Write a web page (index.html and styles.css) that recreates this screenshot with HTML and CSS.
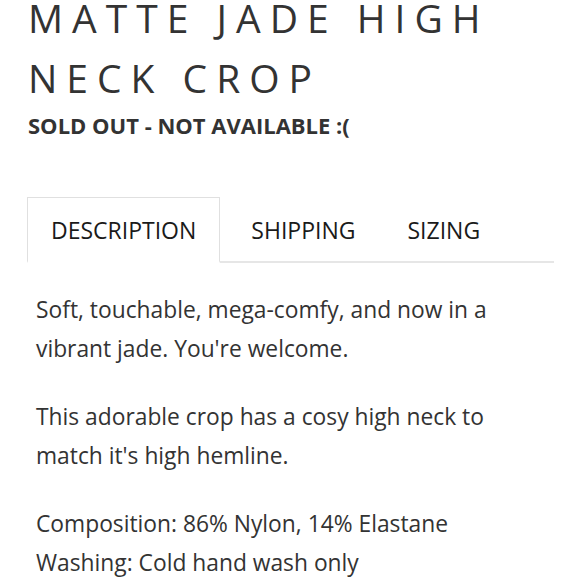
FILE: index.html
```html
<!DOCTYPE html>
<html lang="en">
<head>
<meta charset="utf-8">
<title>Matte Jade High Neck Crop</title>
<link rel="stylesheet" href="styles.css">
</head>
<body>
<main class="product">
  <h1 class="product-title">MATTE JADE HIGH<br>NECK CROP</h1>
  <p class="stock">SOLD OUT - NOT AVAILABLE :(</p>

  <ul class="tabs">
    <li class="tab is-active">DESCRIPTION</li>
    <li class="tab">SHIPPING</li>
    <li class="tab">SIZING</li>
  </ul>

  <div class="tab-panel">
    <p>Soft, touchable, mega-comfy, and now in a<br>vibrant jade. You're welcome.</p>
    <p>This adorable crop has a cosy high neck to<br>match it's high hemline.</p>
    <p>Composition: 86% Nylon, 14% Elastane<br>Washing: Cold hand wash only</p>
  </div>
</main>
</body>
</html>
```
FILE: styles.css
```css
html, body {
  margin: 0;
  padding: 0;
  background: #fff;
}

body {
  font-family: "Open Sans", Lato, sans-serif;
  color: #333;
  overflow: hidden;
}

.product {
  padding: 0 27px 0 28px;
  width: 526px;
}

.product-title {
  margin: -12px 0 0;
  font-weight: 400;
  font-size: 39px;
  line-height: 59.5px;
  letter-spacing: 9px;
  white-space: nowrap;
  color: #333;
}

.stock {
  margin: 3px 0 0;
  font-weight: 700;
  font-size: 22px;
  line-height: 30px;
  color: #333;
}

.tabs {
  list-style: none;
  margin: 57px 0 0 -1px;
  padding: 0;
  display: flex;
  border-bottom: 2px solid #e6e6e6;
  height: 64px;
}

.tab {
  display: flex;
  align-items: center;
  padding: 0 26px;
  font-size: 23px;
  color: #1a1a1a;
  margin-bottom: -2px;
}

.tab.is-active {
  padding: 0 23px;
  margin-right: 5px;
  border: 1px solid #e0e0e0;
  border-bottom: 2px solid #fff;
  background: #fff;
}

.tab-panel {
  padding: 28px 0 0 8px;
}

.tab-panel p {
  margin: 0 0 29.6px;
  font-size: 22.8px;
  line-height: 38.7px;
  color: #333;
  white-space: nowrap;
}
```
